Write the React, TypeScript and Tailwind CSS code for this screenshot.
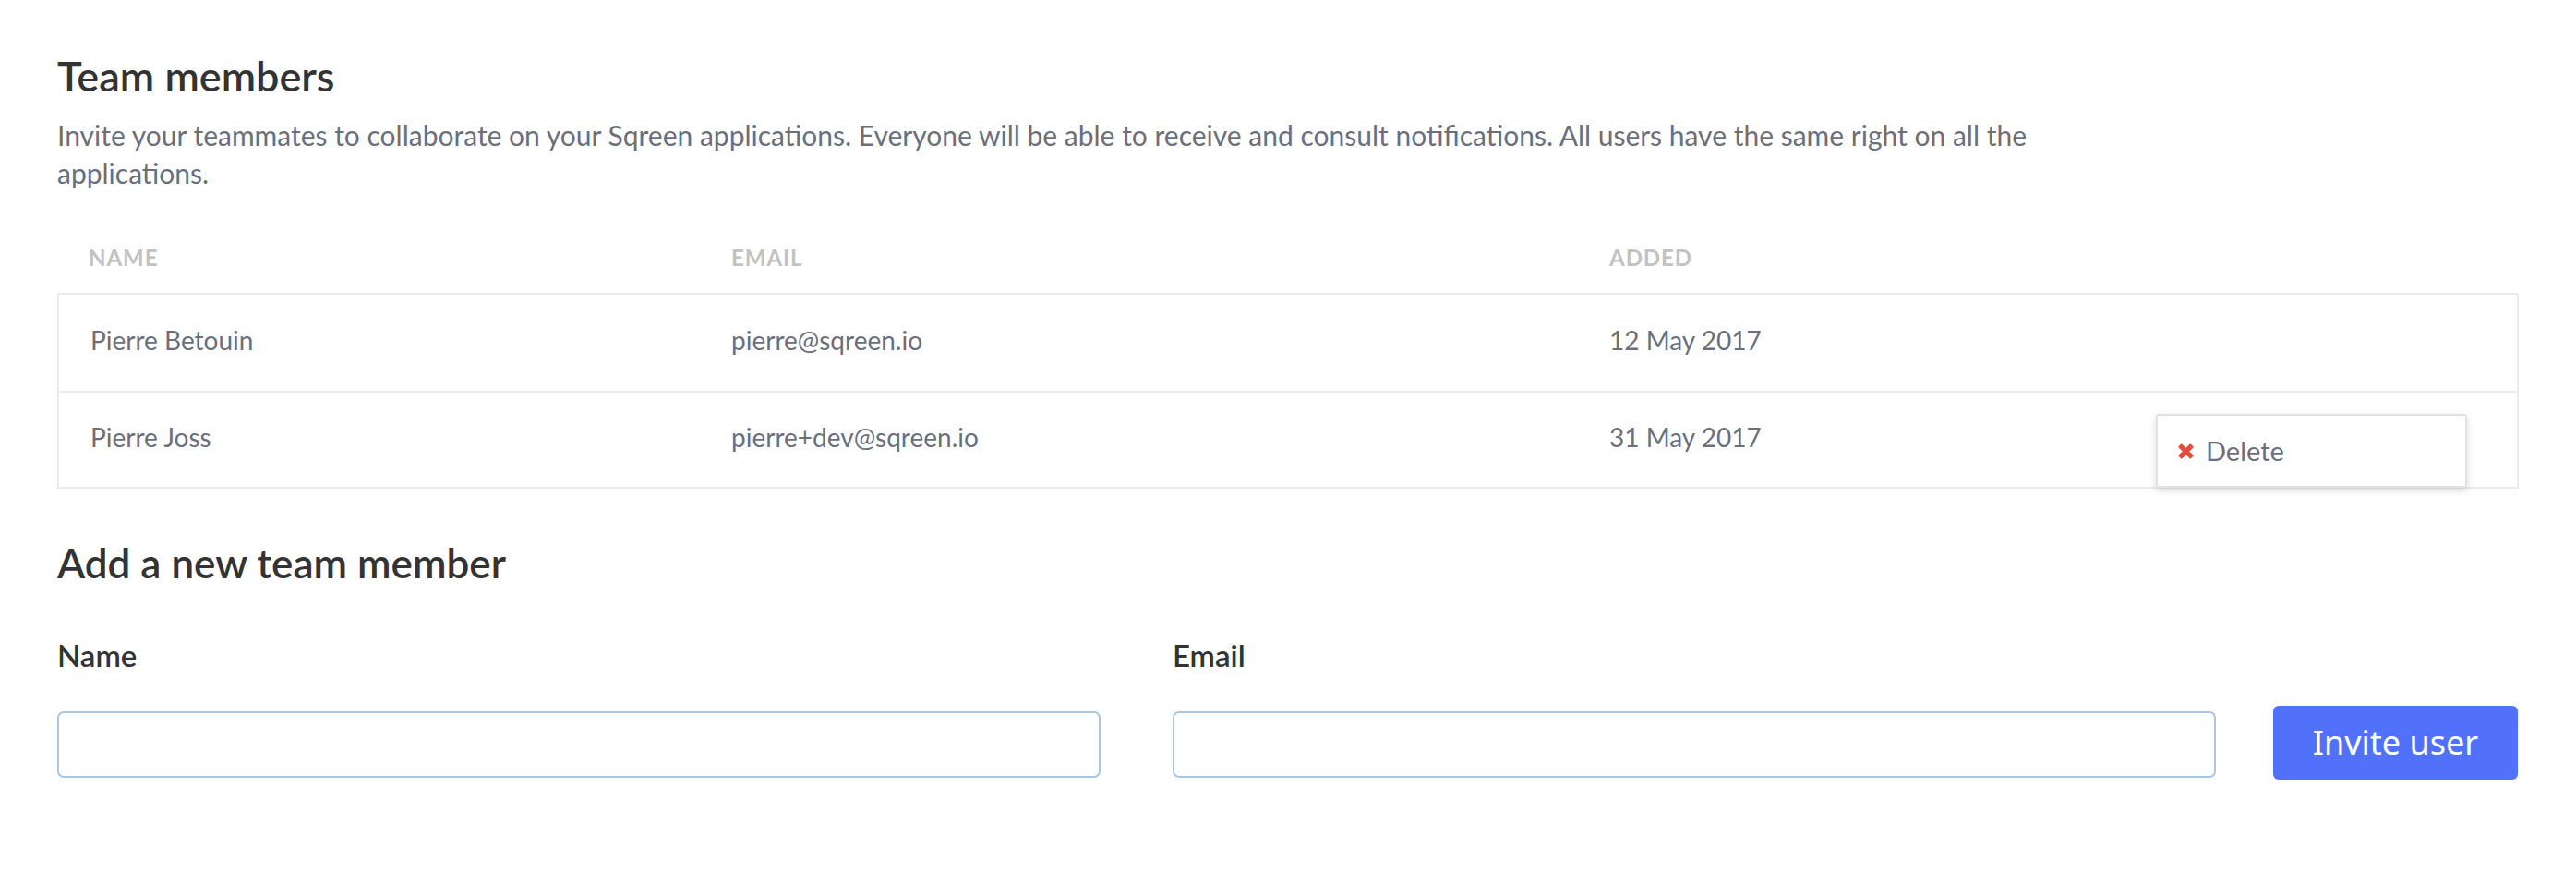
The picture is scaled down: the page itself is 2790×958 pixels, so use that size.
import React from 'react';

const members = [
  { name: 'Pierre Betouin', email: 'pierre@sqreen.io', added: '12 May 2017' },
  { name: 'Pierre Joss', email: 'pierre+dev@sqreen.io', added: '31 May 2017' },
];

function CrossIcon() {
  return (
    <svg viewBox="0 0 20 20" className="w-[19px] h-[19px]">
      <path d="M2.5 5 L5 2.5 L10 7.5 L15 2.5 L17.5 5 L12.5 10 L17.5 15 L15 17.5 L10 12.5 L5 17.5 L2.5 15 L7.5 10 Z" fill="#e74c3c" stroke="#e74c3c" strokeWidth="2" strokeLinejoin="round" />
    </svg>
  );
}

export default function App() {
  return (
    <div className="min-h-[958px] bg-white px-[62px] pt-[58px] font-['Lato','Liberation_Sans',sans-serif]">
      <h1 className="text-[45px] leading-[48px] font-semibold text-[#333333]">Team members</h1>
      <p className="mt-[20px] w-[2215px] text-[30px] leading-[41px] text-[#6a6f7b]">
        Invite your teammates to collaborate on your Sqreen applications. Everyone will be able to receive and consult notifications. All users have the same right on all the applications.
      </p>

      {/* Members table */}
      <div className="mt-[33px]">
        <div className="grid grid-cols-[694px_951px_1fr] h-[76px] items-center text-[24px] font-bold tracking-[0.04em] text-[#c2c2c2]">
          <div className="pl-[34px]">NAME</div>
          <div className="pl-[36px]">EMAIL</div>
          <div className="pl-[36px]">ADDED</div>
        </div>
        <div className="relative border-2 border-[#ebebeb]">
          {members.map((m, i) => (
            <div
              key={m.email}
              className={`grid grid-cols-[692px_951px_1fr] h-[104px] items-center pb-[6px] text-[28px] text-[#6a6f7b] ${i > 0 ? 'border-t-2 border-[#ebebeb]' : ''}`}
            >
              <div className="pl-[34px]">{m.name}</div>
              <div className="pl-[36px]">{m.email}</div>
              <div className="pl-[36px]">{m.added}</div>
            </div>
          ))}
          {/* row action menu */}
          <div className="absolute left-[2271px] top-[129px] w-[337px] h-[80px] bg-white border-2 border-[#e2e2e2] rounded-[3px] shadow-[0_3px_8px_rgba(0,0,0,0.15)] flex items-center gap-[12px] pl-[21px]">
            <CrossIcon />
            <span className="text-[29px] text-[#6a6f7b]">Delete</span>
          </div>
        </div>
      </div>

      <h2 className="mt-[56px] text-[44px] leading-[48px] font-semibold text-[#333333]">Add a new team member</h2>

      <div className="mt-[56px] flex items-end">
        <div className="w-[1130px]">
          <label className="block text-[33px] leading-[40px] font-semibold text-[#333333]">Name</label>
          <input className="mt-[41px] w-full h-[72px] rounded-[7px] border-2 border-[#a9c6e0] px-[20px] text-[28px] outline-none" />
        </div>
        <div className="w-[1130px] ml-[78px]">
          <label className="block text-[33px] leading-[40px] font-semibold text-[#333333]">Email</label>
          <input className="mt-[41px] w-full h-[72px] rounded-[7px] border-2 border-[#a9c6e0] px-[20px] text-[28px] outline-none" />
        </div>
        <button className="ml-[62px] mb-[-2px] w-[265px] h-[80px] rounded-[6px] bg-[#5271fa] text-white text-[36px] font-['Noto_Sans','Open_Sans',sans-serif]">
          Invite user
        </button>
      </div>
    </div>
  );
}
